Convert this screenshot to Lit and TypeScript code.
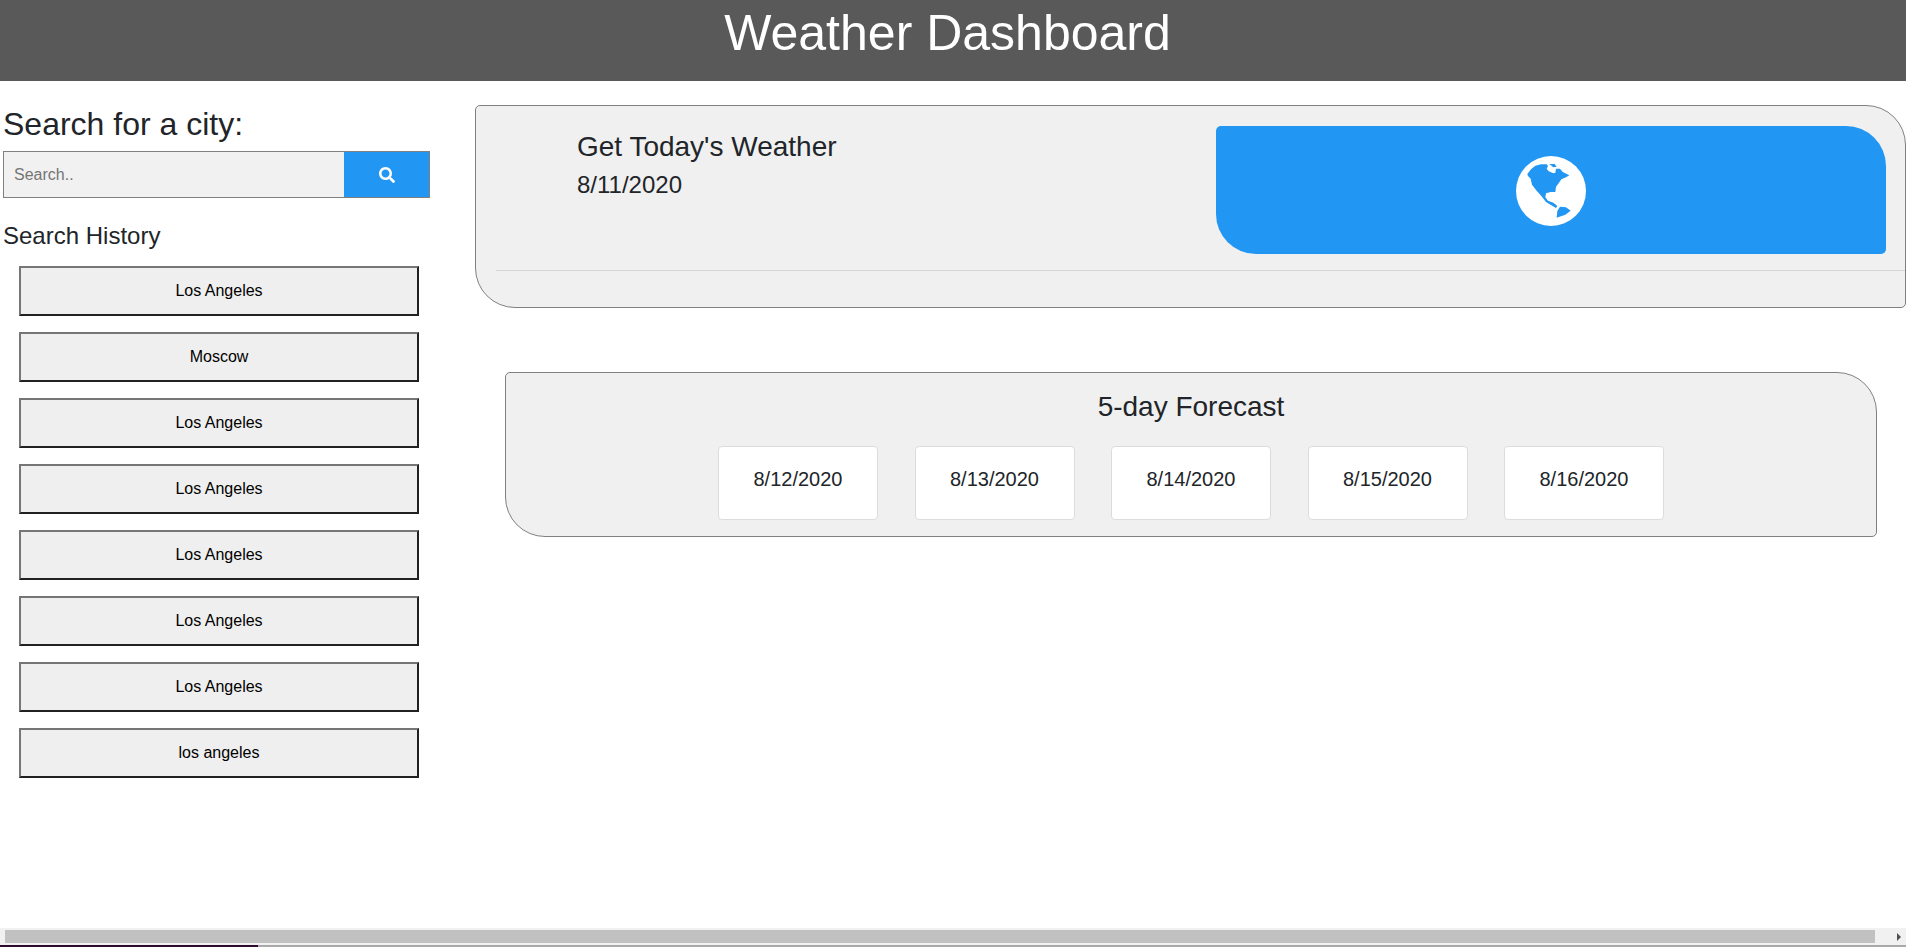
import {LitElement, html, css} from 'lit';
import {customElement} from 'lit/decorators.js';

const HISTORY = [
    'Los Angeles', 'Moscow', 'Los Angeles', 'Los Angeles',
    'Los Angeles', 'Los Angeles', 'Los Angeles', 'los angeles',
];
const FORECAST = ['8/12/2020', '8/13/2020', '8/14/2020', '8/15/2020', '8/16/2020'];

@customElement('app-root')
export class AppRoot extends LitElement {
    static styles = css`
        :host {
            display: flex;
            flex-direction: column;
            width: 1906px;
            height: 947px;
            overflow: hidden;
            background: #fff;
            color: #212529;
            font-family: "Liberation Sans", Arial, sans-serif;
        }

        header {
            height: 81px;
            flex: none;
            background: #595959;
            color: #fff;
            text-align: center;
            font-size: 50px;
            line-height: 66px;
            padding-right: 11px;
            box-sizing: border-box;
        }

        .content {
            flex: 1;
            display: flex;
            min-height: 0;
        }

        /* left column */
        .side {
            width: 475px;
            flex: none;
            padding: 24px 0 0 3px;
            box-sizing: border-box;
        }

        .side h3 {
            margin: 0 0 8px;
            font-size: 32px;
            font-weight: 400;
            line-height: 38px;
        }

        .search {
            display: flex;
            width: 427px;
            height: 47px;
        }

        .search input {
            flex: 1;
            min-width: 0;
            padding: 0 10px;
            border: 1px solid #808080;
            border-right: none;
            background: #f1f1f1;
            font: 16px "Liberation Sans", Arial, sans-serif;
        }

        .search input::placeholder {
            color: #757575;
        }

        .search button {
            width: 86px;
            border: 1px solid #808080;
            border-left: none;
            background: #2196f3;
            display: flex;
            align-items: center;
            justify-content: center;
            padding: 0;
        }

        .search svg {
            width: 16px;
            height: 16px;
        }

        .side h4 {
            margin: 23px 0 16px;
            font-size: 24px;
            font-weight: 400;
            line-height: 29px;
        }

        .history {
            display: flex;
            flex-direction: column;
            gap: 16px;
            padding-left: 16px;
        }

        .history button {
            width: 400px;
            height: 50px;
            padding: 0;
            background: #efefef;
            border: 2px solid;
            border-color: #767676 #212121 #212121 #767676;
            color: #000;
            font: 16px "Liberation Sans", Arial, sans-serif;
        }

        /* right column */
        .main {
            flex: 1;
            min-width: 0;
            padding-top: 24px;
        }

        .today {
            height: 203px;
            box-sizing: border-box;
            border: 1px solid #808080;
            border-radius: 5px 40px 5px 40px;
            background: #f0f0f0;
        }

        .today-top {
            display: flex;
            height: 164px;
            padding: 20px 19px 0 101px;
            box-sizing: border-box;
            justify-content: space-between;
        }

        .today-text {
            padding-top: 4px;
        }

        .today h2 {
            margin: 0;
            font-size: 28px;
            font-weight: 400;
            line-height: 34px;
        }

        .today p {
            margin: 6px 0 0;
            font-size: 24px;
            line-height: 29px;
        }

        .banner {
            width: 670px;
            height: 128px;
            background: #2196f3;
            border-radius: 5px 40px 5px 40px;
            display: flex;
            align-items: center;
            justify-content: center;
        }

        .banner svg {
            width: 70px;
            height: 70px;
            margin-top: 2px;
        }

        .today hr {
            margin: 0 0 0 20px;
            border: none;
            border-top: 1px solid #d6d6d6;
        }

        .forecast {
            margin: 64px 29px 0 30px;
            height: 165px;
            box-sizing: border-box;
            border: 1px solid #808080;
            border-radius: 5px 40px 5px 40px;
            background: #f0f0f0;
            padding-top: 15px;
            text-align: center;
        }

        .forecast h2 {
            margin: 0 0 21px;
            font-size: 28px;
            font-weight: 400;
            line-height: 37px;
        }

        .days {
            display: flex;
            justify-content: center;
            gap: 36.5px;
        }

        .day {
            width: 160px;
            height: 74px;
            box-sizing: border-box;
            background: #fff;
            border: 1px solid #dcdcdc;
            border-radius: 4px;
            padding-top: 20px;
            font-size: 20px;
            line-height: 24px;
        }

        /* the browser's horizontal scrollbar and the strip under it */
        .scrollbar {
            flex: none;
            height: 17px;
            background: #f1f1f1;
            display: flex;
            align-items: center;
            padding-left: 5px;
            position: relative;
        }

        .thumb {
            width: 1870px;
            height: 13px;
            background: #c1c1c1;
        }

        .arrow {
            position: absolute;
            left: 1897px;
            top: 5px;
            border-left: 4px solid #505050;
            border-top: 4px solid transparent;
            border-bottom: 4px solid transparent;
        }

        .strip {
            flex: none;
            height: 2px;
            background: linear-gradient(to right, #2c0b2e 258px, #a9a9a9 258px);
        }
    `;

    render() {
        return html`
            <header>Weather Dashboard</header>
            <div class="content">
                <aside class="side">
                    <h3>Search for a city:</h3>
                    <div class="search">
                        <input type="text" placeholder="Search..">
                        <button aria-label="Search">
                            <svg viewBox="0 0 512 512"><path fill="#fff" d="M505 442.7 405.3 343c-4.500-4.500-10.600-7-17-7H372c27.600-35.300 44-79.700 44-128C416 93.100 322.900 0 208 0S0 93.100 0 208s93.100 208 208 208c48.300 0 92.700-16.400 128-44v16.300c0 6.400 2.500 12.500 7 17l99.700 99.700c9.400 9.400 24.600 9.400 33.900 0l28.300-28.300c9.400-9.400 9.400-24.600.1-34zM208 336c-70.700 0-128-57.200-128-128 0-70.700 57.200-128 128-128 70.700 0 128 57.200 128 128 0 70.700-57.200 128-128 128z"/></svg>
                        </button>
                    </div>
                    <h4>Search History</h4>
                    <div class="history">
                        ${HISTORY.map((city) => html`<button>${city}</button>`)}
                    </div>
                </aside>
                <main class="main">
                    <section class="today">
                        <div class="today-top">
                            <div class="today-text">
                                <h2>Get Today's Weather</h2>
                                <p>8/11/2020</p>
                            </div>
                            <div class="banner">
                                <svg viewBox="0 0 210 210">
                                    <circle cx="105" cy="105" r="105" fill="#fff"/>
                                    <path fill="#2196f3" d="M34 54 45 40 58 29 75 25 92 25 96 30 92 38 98 46 112 52 118 50 120 38 132 38 140 48 160 58 150 64 136 70 128 82 120 92 118 108 104 108 90 112 88 124 96 134 112 140 124 150 120 156 106 148 90 138 76 120 60 102 48 86 44 68 36 60Z"/>
                                    <path fill="#2196f3" d="M100 24 116 24 122 32 112 34Z"/>
                                    <path fill="#2196f3" d="M122 185 124 165 132 152 150 154 164 164 148 176Z"/>
                                </svg>
                            </div>
                        </div>
                        <hr>
                    </section>
                    <section class="forecast">
                        <h2>5-day Forecast</h2>
                        <div class="days">
                            ${FORECAST.map((day) => html`<div class="day">${day}</div>`)}
                        </div>
                    </section>
                </main>
            </div>
            <div class="scrollbar">
                <div class="thumb"></div>
                <div class="arrow"></div>
            </div>
            <div class="strip"></div>
        `;
    }
}
